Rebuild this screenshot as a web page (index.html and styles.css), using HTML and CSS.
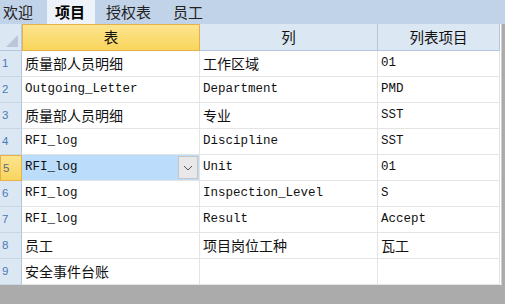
FILE: index.html
```html
<!DOCTYPE html>
<html lang="zh">
<head>
    <meta charset="UTF-8">
    <title>项目</title>
    <link rel="stylesheet" href="styles.css">
</head>
<body>
<div class="tabs">
    <span class="tab">欢迎</span>
    <span class="tab activo">项目</span>
    <span class="tab">授权表</span>
    <span class="tab">员工</span>
</div>

<div class="rejilla">
    <div class="esquina"></div>
    <div class="cab sel">表</div>
    <div class="cab">列</div>
    <div class="cab">列表项目</div>

    <div class="num">1</div>
    <div class="celda">质量部人员明细</div>
    <div class="celda">工作区域</div>
    <div class="celda en">01</div>

    <div class="num">2</div>
    <div class="celda en">Outgoing_Letter</div>
    <div class="celda en">Department</div>
    <div class="celda en">PMD</div>

    <div class="num">3</div>
    <div class="celda">质量部人员明细</div>
    <div class="celda">专业</div>
    <div class="celda en">SST</div>

    <div class="num">4</div>
    <div class="celda en">RFI_log</div>
    <div class="celda en">Discipline</div>
    <div class="celda en">SST</div>

    <div class="num actual">5</div>
    <div class="celda en elegida">
        <span>RFI_log</span>
        <span class="boton">
            <svg width="10" height="6" viewBox="0 0 10 6"><path d="M1 1 L5 5 L9 1" fill="none" stroke="#555" stroke-width="1"/></svg>
        </span>
    </div>
    <div class="celda en">Unit</div>
    <div class="celda en">01</div>

    <div class="num">6</div>
    <div class="celda en">RFI_log</div>
    <div class="celda en">Inspection_Level</div>
    <div class="celda en">S</div>

    <div class="num">7</div>
    <div class="celda en">RFI_log</div>
    <div class="celda en">Result</div>
    <div class="celda en">Accept</div>

    <div class="num">8</div>
    <div class="celda">员工</div>
    <div class="celda">项目岗位工种</div>
    <div class="celda">瓦工</div>

    <div class="num">9</div>
    <div class="celda">安全事件台账</div>
    <div class="celda"></div>
    <div class="celda"></div>
</div>
</body>
</html>
```

FILE: styles.css
```css
body {
    margin: 0;
    background-color: #ababab;
    font-family: "Noto Sans CJK SC", sans-serif;
    color: #111;
}

.tabs {
    display: flex;
    height: 24px;
    background-color: #c1d3e8;
    padding-left: 3px;
}

.tab {
    font-size: 15px;
    line-height: 23px;
    margin-right: 22px;
    color: #222;
}

.tab.activo {
    background-color: #eef3fa;
    padding: 0 10px 0 8px;
    margin-left: -8px;
    margin-right: 11px;
    font-weight: bold;
    color: #000;
}

.rejilla {
    display: grid;
    grid-template-columns: 22px 178px 178px 122px;
    grid-template-rows: 27px;
    grid-auto-rows: 26px;
    width: 502px;
    background-color: #fff;
    border-right: 1px solid #d0d0d0;
    box-sizing: border-box;
}

.esquina, .cab, .num, .celda {
    box-sizing: border-box;
}

.esquina {
    background-color: #dce7f4;
    border-right: 1px solid #b5c7dd;
    border-bottom: 1px solid #b5c7dd;
    position: relative;
}

.esquina::after {
    content: "";
    position: absolute;
    right: 3px;
    bottom: 3px;
    border-left: 12px solid transparent;
    border-bottom: 12px solid #b9c7d8;
}

.cab {
    background-color: #dce7f4;
    border-right: 1px solid #b5c7dd;
    border-bottom: 1px solid #b5c7dd;
    text-align: center;
    font-size: 14.5px;
    line-height: 26px;
}

.cab.sel {
    background: linear-gradient(#fde48f, #f8d55c);
    border: 1px solid #e8b04a;
    line-height: 24px;
}

.num {
    background-color: #dce7f4;
    border-right: 1px solid #b5c7dd;
    border-bottom: 1px solid #c9d7e8;
    color: #4a7ab5;
    font-family: "Liberation Sans", sans-serif;
    font-size: 11.5px;
    line-height: 25px;
    padding-left: 2px;
}

.num.actual {
    background: linear-gradient(#fde48f, #f8d55c);
    border: 1px solid #e8b04a;
    color: #5a6a80;
}

.celda {
    border-right: 1px solid #e4e4e4;
    border-bottom: 1px solid #e4e4e4;
    padding-left: 3px;
    font-size: 14px;
    line-height: 24px;
    white-space: nowrap;
    overflow: hidden;
}

.celda.en {
    font-family: "Liberation Mono", monospace;
    font-size: 12.5px;
    line-height: 25px;
}

.celda.elegida {
    display: flex;
    justify-content: space-between;
    background-color: #bcdcfb;
    padding-right: 1px;
}

.boton {
    width: 20px;
    height: 23px;
    margin-top: 1px;
    box-sizing: border-box;
    background-color: #e8e8e8;
    border: 1px solid #c6c6c6;
    display: flex;
    align-items: center;
    justify-content: center;
}
```
